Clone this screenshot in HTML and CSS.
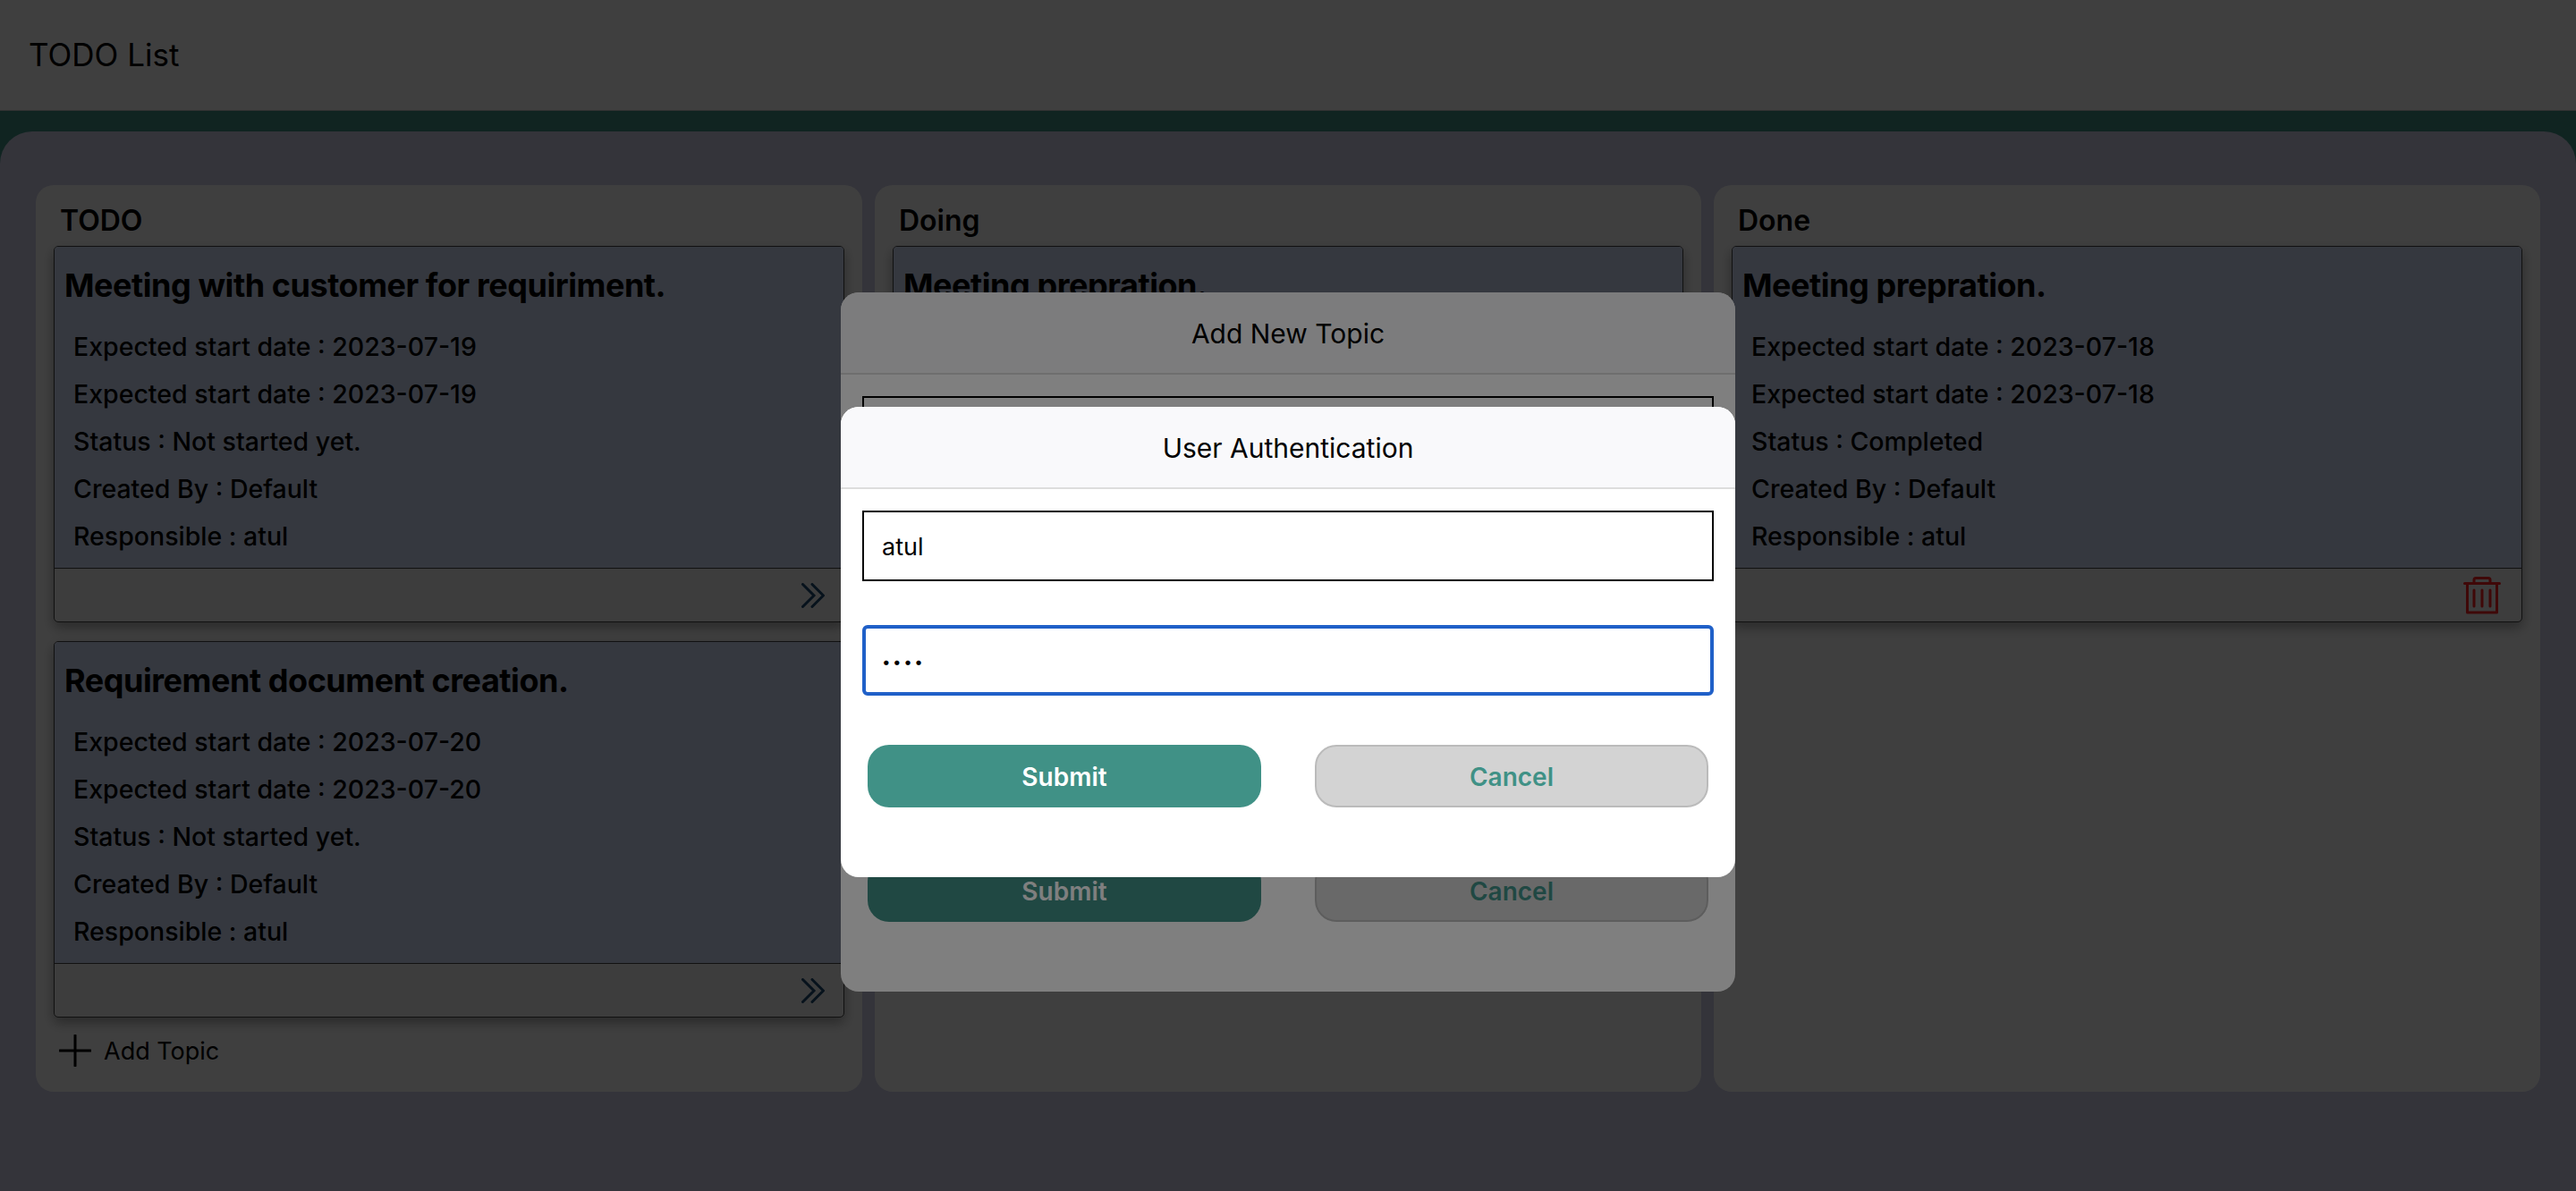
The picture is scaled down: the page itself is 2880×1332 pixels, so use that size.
FILE: index.html
```html
<!DOCTYPE html>
<html>
<head>
  <title>TODO List</title>
  <link rel="stylesheet" href="styles.css">
</head>
<body>
  <header class="topbar">TODO List</header>
  <main class="board">
    <section class="column">
      <h3 class="column-title">TODO</h3>
      <div class="card">
        <div class="card-body">
          <h2 class="card-title">Meeting with customer for requiriment.</h2>
          <p class="card-line">Expected start date : 2023-07-19</p>
          <p class="card-line">Expected start date : 2023-07-19</p>
          <p class="card-line">Status : Not started yet.</p>
          <p class="card-line">Created By : Default</p>
          <p class="card-line">Responsible : atul</p>
        </div>
        <div class="card-footer">
          <svg class="icon-next" viewBox="0 0 26 28"><path d="M1.5 1.5 14 14 1.5 26.5M12 1.5 24.5 14 12 26.5"/></svg>
        </div>
      </div>
      <div class="card">
        <div class="card-body">
          <h2 class="card-title">Requirement document creation.</h2>
          <p class="card-line">Expected start date : 2023-07-20</p>
          <p class="card-line">Expected start date : 2023-07-20</p>
          <p class="card-line">Status : Not started yet.</p>
          <p class="card-line">Created By : Default</p>
          <p class="card-line">Responsible : atul</p>
        </div>
        <div class="card-footer">
          <svg class="icon-next" viewBox="0 0 26 28"><path d="M1.5 1.5 14 14 1.5 26.5M12 1.5 24.5 14 12 26.5"/></svg>
        </div>
      </div>
      <div class="add-topic">
        <svg class="icon-plus" viewBox="0 0 36 36"><path d="M18 1V35M1 18H35"/></svg>
        <span>Add Topic</span>
      </div>
    </section>

    <section class="column">
      <h3 class="column-title">Doing</h3>
      <div class="card">
        <div class="card-body">
          <h2 class="card-title">Meeting prepration.</h2>
          <p class="card-line">Expected start date : 2023-07-18</p>
          <p class="card-line">Expected start date : 2023-07-18</p>
          <p class="card-line">Status : In progress</p>
          <p class="card-line">Created By : Default</p>
          <p class="card-line">Responsible : atul</p>
        </div>
        <div class="card-footer">
          <svg class="icon-next" viewBox="0 0 26 28"><path d="M1.5 1.5 14 14 1.5 26.5M12 1.5 24.5 14 12 26.5"/></svg>
        </div>
      </div>
    </section>

    <section class="column">
      <h3 class="column-title">Done</h3>
      <div class="card">
        <div class="card-body">
          <h2 class="card-title">Meeting prepration.</h2>
          <p class="card-line">Expected start date : 2023-07-18</p>
          <p class="card-line">Expected start date : 2023-07-18</p>
          <p class="card-line">Status : Completed</p>
          <p class="card-line">Created By : Default</p>
          <p class="card-line">Responsible : atul</p>
        </div>
        <div class="card-footer">
          <svg class="icon-trash" viewBox="0 0 42 42"><path d="M1.500 7.500H40.500M4.500 7.500V40H37.500V7.500M12 7.500V3.500Q12 1.500 14 1.500H28Q30 1.500 30 3.500V7.500M12 15V33M21 15V33M30 15V33"/></svg>
        </div>
      </div>
    </section>
  </main>

  <div class="overlay">
    <div class="modal">
      <div class="modal-header">Add New Topic</div>
      <div class="modal-body">
        <input class="field" type="text">
        <input class="field" type="text">
        <input class="field" type="text">
        <input class="field" type="text">
        <div class="modal-buttons">
          <button class="btn btn-submit">Submit</button>
          <button class="btn btn-cancel">Cancel</button>
        </div>
      </div>
    </div>
  </div>

  <div class="overlay">
    <div class="modal">
      <div class="modal-header">User Authentication</div>
      <div class="modal-body">
        <input class="field" type="text" value="atul">
        <input class="field field-focus" type="password" value="atul">
        <div class="modal-buttons">
          <button class="btn btn-submit">Submit</button>
          <button class="btn btn-cancel">Cancel</button>
        </div>
      </div>
    </div>
  </div>
</body>
</html>
```

FILE: styles.css
```css
* {
  box-sizing: border-box;
}

html, body {
  height: 100%;
}

body {
  margin: 0;
  display: flex;
  flex-direction: column;
  overflow: hidden;
  background-color: #409186;
  font-family: Inter, "Liberation Sans", sans-serif;
  color: #000;
}

.topbar {
  flex: none;
  height: 124px;
  padding: 0 32px 2px;
  display: flex;
  align-items: center;
  background-color: #fff;
  border-bottom: 1px solid #ccc;
  font-size: 35px;
}

.board {
  flex: none;
  height: 1185px;
  margin-top: 23px;
  padding: 60px 40px 111px;
  display: grid;
  grid-template-columns: repeat(3, 1fr);
  column-gap: 14px;
  background-color: #d0d0e8;
  border-radius: 36px 36px 0 0;
}

.column {
  padding: 0 20px;
  background-color: #fff;
  border-radius: 20px;
}

.column-title {
  margin: 0;
  height: 68px;
  padding: 6px 7px 0;
  line-height: 68px;
  font-size: 32px;
  font-weight: 600;
}

.card {
  margin-bottom: 21px;
  border: 1px solid #444;
  border-radius: 5px;
  background-color: #f5f5f5;
  box-shadow: 0 6px 14px rgba(0, 0, 0, 0.35);
}

.card-body {
  height: 360px;
  padding: 21px 11px 0;
  background-color: #d4e0ff;
  border-bottom: 1px solid #444;
  border-radius: 4px 4px 0 0;
}

.card-title {
  margin: 0 0 20px;
  line-height: 44px;
  font-size: 36px;
  font-weight: 700;
  letter-spacing: -0.45px;
}

.card-line {
  margin: 0;
  padding-left: 10px;
  line-height: 53px;
  font-size: 28.5px;
  font-weight: 500;
}

.card-footer {
  height: 59px;
  padding-right: 21px;
  display: flex;
  align-items: center;
  justify-content: flex-end;
}

.icon-next {
  width: 26px;
  height: 28px;
  fill: none;
  stroke: #1c4a70;
  stroke-width: 3;
  stroke-linecap: round;
}

.icon-trash {
  width: 42px;
  height: 42px;
  margin-right: 2px;
  fill: none;
  stroke: #ff2020;
  stroke-width: 3;
  stroke-linecap: round;
  stroke-linejoin: round;
}

.add-topic {
  margin-top: -2px;
  display: flex;
  align-items: center;
  gap: 14px;
  padding-left: 6px;
  font-size: 27px;
}

.icon-plus {
  width: 36px;
  height: 36px;
  fill: none;
  stroke: #000;
  stroke-width: 3;
  stroke-linecap: round;
}

.overlay {
  position: fixed;
  inset: 0;
  padding-top: 104px;
  display: flex;
  align-items: center;
  justify-content: center;
  background-color: rgba(0, 0, 0, 0.5);
}

.modal {
  width: 1000px;
  background-color: #fff;
  border-radius: 20px;
  overflow: hidden;
}

.modal-header {
  height: 92px;
  padding-top: 2px;
  display: flex;
  align-items: center;
  justify-content: center;
  background-color: #f9f9fb;
  border-bottom: 2px solid #ddd;
  font-size: 30px;
}

.modal-body {
  padding: 24px 24px 78px;
  display: flex;
  flex-direction: column;
  gap: 49px;
}

.field {
  width: 100%;
  height: 79px;
  padding: 2px 20px 0;
  border: 2px solid #000;
  border-radius: 0;
  background-color: #fff;
  outline: none;
  font-family: inherit;
  font-size: 27px;
  color: #000;
}

.field-focus {
  border: 4px solid #2060c8;
  border-radius: 6px;
  padding: 2px 18px 0;
  font-size: 17px;
  letter-spacing: 2.5px;
}

.modal-buttons {
  margin-top: 6px;
  padding: 0 6px;
  display: grid;
  grid-template-columns: 440px 440px;
  justify-content: space-between;
}

.btn {
  height: 70px;
  padding-top: 2px;
  border-radius: 24px;
  font-family: inherit;
  font-size: 28px;
  font-weight: 600;
}

.btn-submit {
  background-color: #409186;
  border: none;
  color: #fff;
}

.btn-cancel {
  background-color: #d3d3d3;
  border: 2px solid #bbb;
  color: #409186;
}
```
